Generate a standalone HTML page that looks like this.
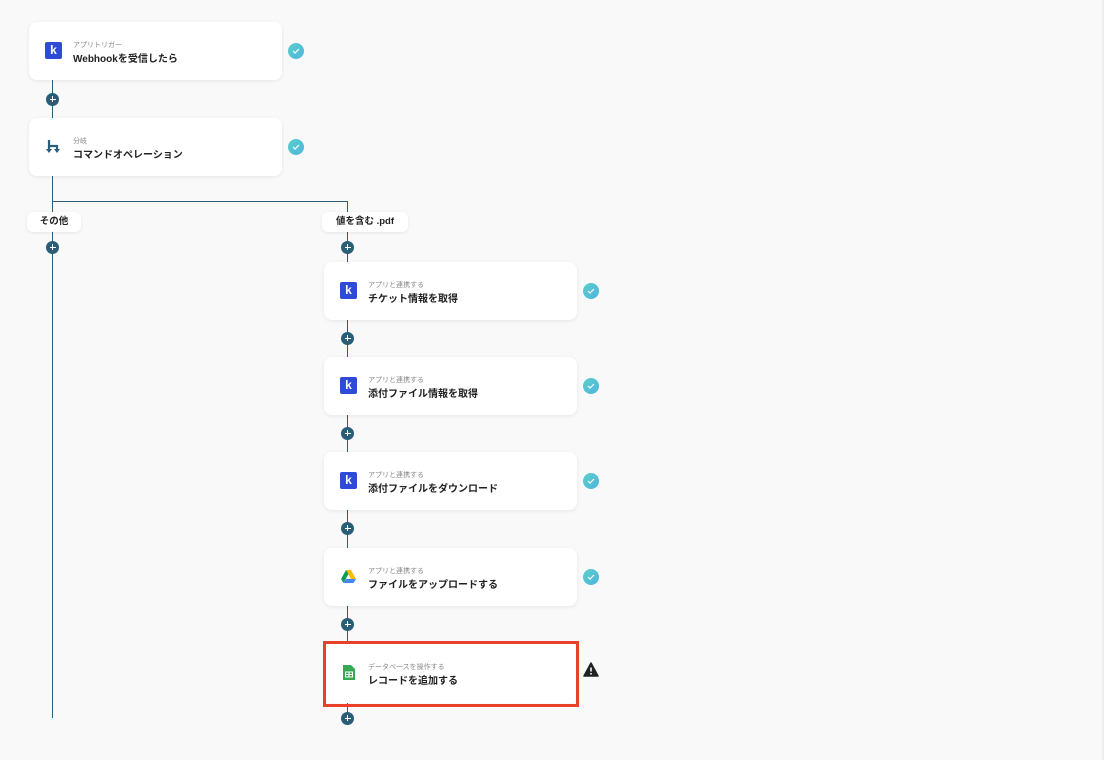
<!DOCTYPE html>
<html><head><meta charset="utf-8"><style>
body{margin:0;width:1104px;height:760px;background:#f9f9f9;position:relative;overflow:hidden;font-family:"Liberation Sans","Noto Sans CJK JP",sans-serif;}
.card{position:absolute;width:253px;height:58px;background:#fff;border-radius:8px;box-shadow:0 1px 4px rgba(0,0,0,.08);}
.card .ic{position:absolute;left:16px;top:20px;width:17px;height:17px;}
.card .s{position:absolute;left:44px;top:18px;font-size:7px;color:#888;}
.card .t{position:absolute;left:44px;top:28px;font-size:10px;font-weight:bold;color:#222;}
.k{background:#2d4bd6;border-radius:2px;color:#fff;font-weight:bold;font-size:12px;line-height:17px;text-align:center;}
.v{position:absolute;width:1px;background:#2a5d78;}
.h{position:absolute;height:1px;background:#2a5d78;}
.p{position:absolute;width:13px;height:13px;border-radius:50%;background:#2a5d78;margin:-6.5px 0 0 -6.5px;}
.p:before{content:"";position:absolute;left:6px;top:3.5px;width:1px;height:6px;background:#fff;}
.p:after{content:"";position:absolute;left:3.5px;top:6px;width:6px;height:1px;background:#fff;}
.c{position:absolute;width:16px;height:16px;border-radius:50%;background:linear-gradient(135deg,#5ad0c8,#4fb3e0);margin:-8px 0 0 -8px;}
.c svg{position:absolute;left:4px;top:4px}
.lb{position:absolute;height:20px;background:#fff;border-radius:6px;font-size:9.5px;font-weight:bold;line-height:20px;text-align:center;box-shadow:0 1px 3px rgba(0,0,0,.08);color:#222}
</style></head><body>
<div style="position:absolute;right:0;top:0;width:2px;height:760px;background:#eee"></div>
<div class="v" style="left:52px;top:80px;height:38px"></div>
<div class="v" style="left:52px;top:176px;height:542px"></div>
<div class="h" style="left:52px;top:201px;width:296px"></div>
<div class="v" style="left:347px;top:201px;height:517px"></div>

<div class="card" style="left:29px;top:22px"><div class="ic k">k</div><div class="s">アプリトリガー</div><div class="t">Webhookを受信したら</div></div>
<div class="card" style="left:29px;top:118px"><svg class="ic" viewBox="0 0 17 17"><path d="M4 2v10M4 8h8v4" stroke="#2a5d78" stroke-width="2.2" fill="none"/><path d="M1 11l3 4 3-4zM9 11l3 4 3-4z" fill="#2a5d78"/></svg><div class="s">分岐</div><div class="t">コマンドオペレーション</div></div>

<div class="lb" style="left:27px;top:212px;width:54px">その他</div>
<div class="lb" style="left:322px;top:212px;width:86px">値を含む .pdf</div>

<div class="card" style="left:324px;top:262px"><div class="ic k">k</div><div class="s">アプリと連携する</div><div class="t">チケット情報を取得</div></div>
<div class="card" style="left:324px;top:357px"><div class="ic k">k</div><div class="s">アプリと連携する</div><div class="t">添付ファイル情報を取得</div></div>
<div class="card" style="left:324px;top:452px"><div class="ic k">k</div><div class="s">アプリと連携する</div><div class="t">添付ファイルをダウンロード</div></div>
<div class="card" style="left:324px;top:548px"><svg class="ic" viewBox="0 0 17 17"><path d="M6 2h5l5 9h-5z" fill="#fbbc04"/><path d="M6 2l-5 9 2.5 4 5-9z" fill="#0f9d58"/><path d="M3.5 15h10l2.5-4H6z" fill="#4285f4"/></svg><div class="s">アプリと連携する</div><div class="t">ファイルをアップロードする</div></div>
<div class="card" style="left:324px;top:643px;height:60px;box-shadow:none"><svg class="ic" viewBox="0 0 17 17" style="top:21px"><path d="M3 1h8l4 4v11H3z" fill="#34a853"/><rect x="5.5" y="8" width="7" height="5" fill="none" stroke="#fff" stroke-width="1"/><path d="M5.5 10.5h7M9 8v5" stroke="#fff" stroke-width="1"/></svg><div class="s" style="top:19px">データベースを操作する</div><div class="t" style="top:29px">レコードを追加する</div></div>
<div style="position:absolute;left:323px;top:641px;width:250px;height:60px;border:3px solid #e8412a"></div>

<div class="p" style="left:52.5px;top:99px"></div><div class="p" style="left:52.5px;top:247px"></div>
<div class="p" style="left:347.5px;top:247px"></div><div class="p" style="left:347.5px;top:338px"></div>
<div class="p" style="left:347.5px;top:433px"></div><div class="p" style="left:347.5px;top:528px"></div>
<div class="p" style="left:347.5px;top:624px"></div><div class="p" style="left:347.5px;top:718px"></div>

<div class="c" style="left:296px;top:51px"><svg width="8" height="8"><path d="M1 4l2 2 4-4" stroke="#fff" stroke-width="1.2" fill="none"/></svg></div>
<div class="c" style="left:296px;top:147px"><svg width="8" height="8"><path d="M1 4l2 2 4-4" stroke="#fff" stroke-width="1.2" fill="none"/></svg></div>
<div class="c" style="left:591px;top:291px"><svg width="8" height="8"><path d="M1 4l2 2 4-4" stroke="#fff" stroke-width="1.2" fill="none"/></svg></div>
<div class="c" style="left:591px;top:386px"><svg width="8" height="8"><path d="M1 4l2 2 4-4" stroke="#fff" stroke-width="1.2" fill="none"/></svg></div>
<div class="c" style="left:591px;top:481px"><svg width="8" height="8"><path d="M1 4l2 2 4-4" stroke="#fff" stroke-width="1.2" fill="none"/></svg></div>
<div class="c" style="left:591px;top:577px"><svg width="8" height="8"><path d="M1 4l2 2 4-4" stroke="#fff" stroke-width="1.2" fill="none"/></svg></div>
<svg style="position:absolute;left:583px;top:662px" width="16" height="15" viewBox="0 0 16 15"><path d="M8 1L15 14H1z" fill="#222" stroke="#222" stroke-linejoin="round" stroke-width="1.5"/><path d="M8 5.5v4" stroke="#fff" stroke-width="1.6"/><circle cx="8" cy="11.8" r="0.9" fill="#fff"/></svg>
</body></html>
